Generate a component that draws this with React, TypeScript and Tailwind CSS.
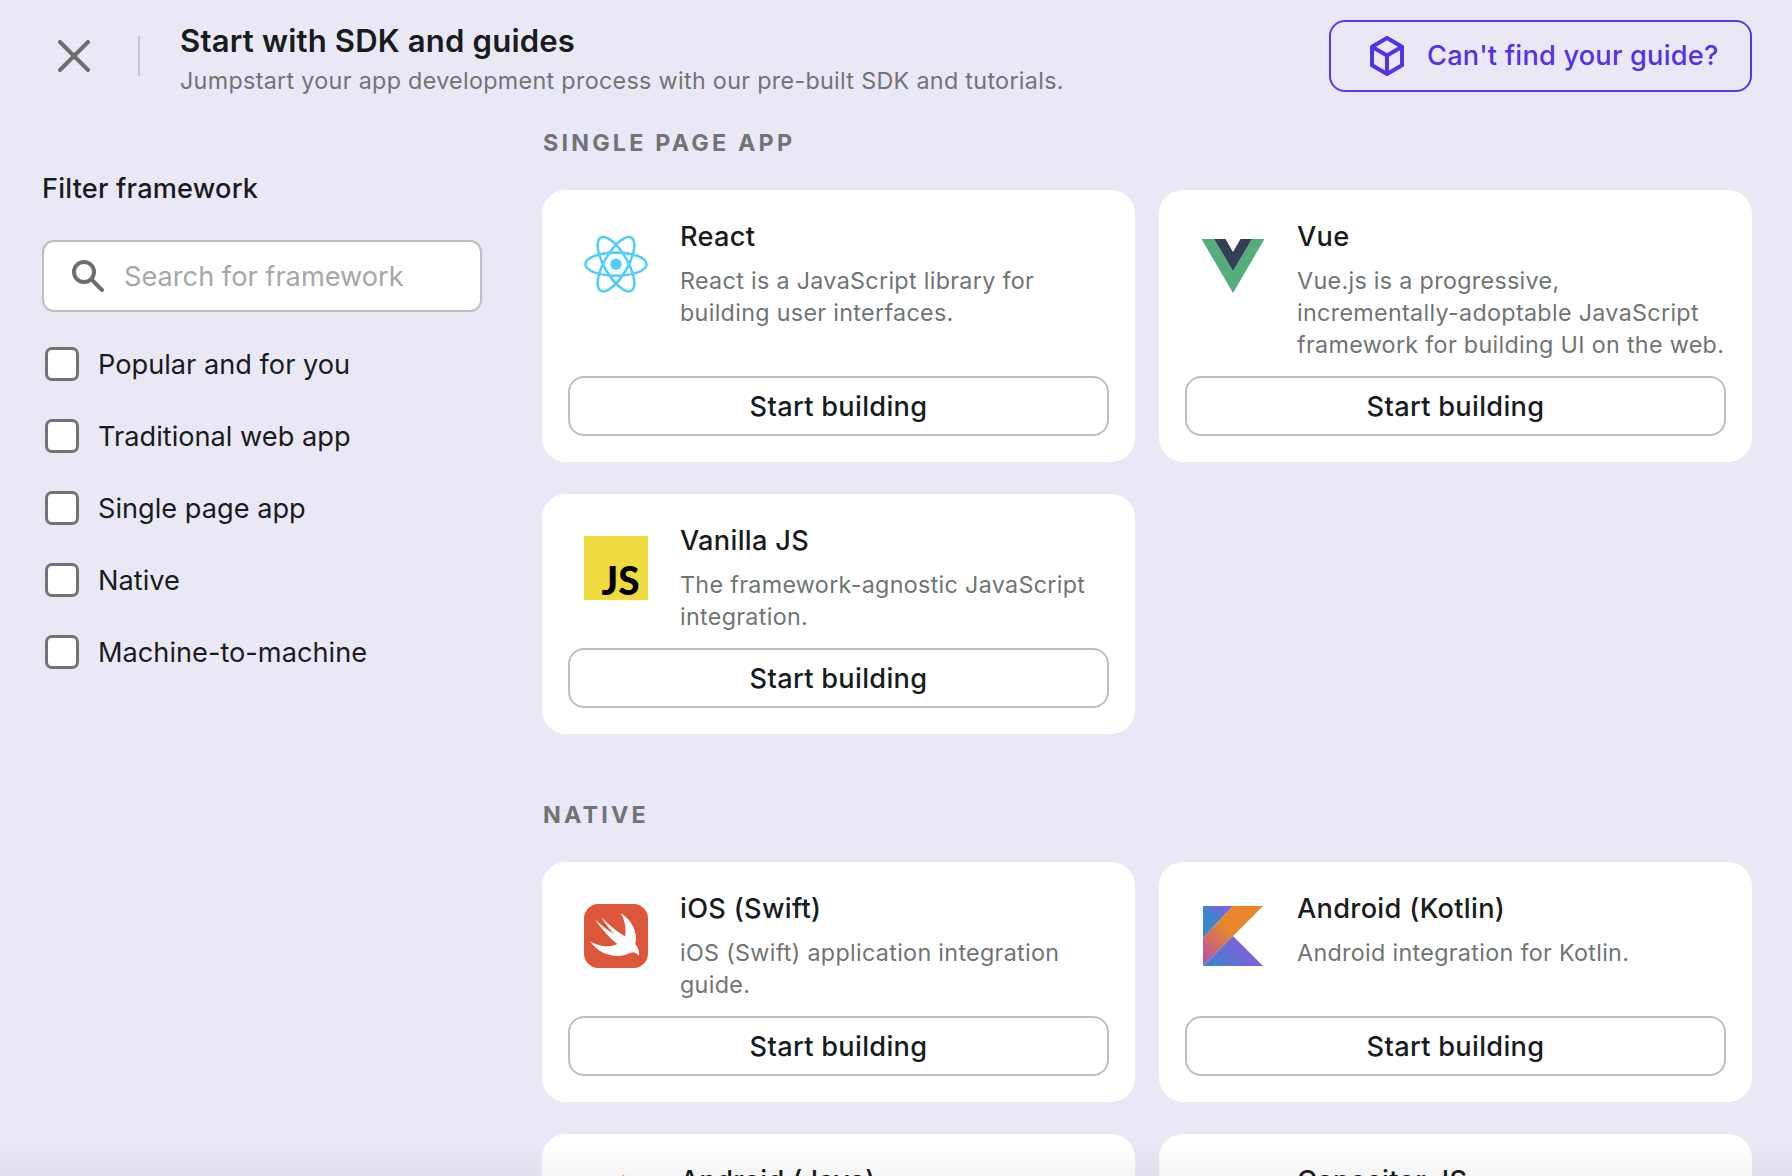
import type { ReactNode } from 'react';

const ReactLogo = () => (
  <svg viewBox="0 0 64 64" className="h-16 w-16" fill="none" stroke="#53cdfb" strokeWidth="2.6">
    <circle cx="32" cy="32.2" r="5.7" fill="#53cdfb" stroke="none" />
    <ellipse cx="32" cy="32.2" rx="30.6" ry="11.6" />
    <ellipse cx="32" cy="32.2" rx="30.6" ry="11.6" transform="rotate(60 32 32.2)" />
    <ellipse cx="32" cy="32.2" rx="30.6" ry="11.6" transform="rotate(120 32 32.2)" />
  </svg>
);

const VueLogo = () => (
  <svg viewBox="0 0 64 64" className="h-16 w-16">
    <path d="M.5 7 32 61 63.5 7H51L32 39 13 7z" fill="#56ad7c" />
    <path d="M13 7 32 39 51 7H39.5L32 20 24.5 7z" fill="#333f54" />
  </svg>
);

const JsLogo = () => (
  <svg viewBox="0 0 64 64" className="h-16 w-16">
    <path d="M0 0h64v64H0z" fill="#eedb3f" />
    <text
      x="17.5"
      y="59.3"
      textLength="38"
      lengthAdjust="spacingAndGlyphs"
      className="font-['Lato',sans-serif] text-[40px] font-black"
    >
      JS
    </text>
  </svg>
);

const SwiftLogo = () => (
  <svg viewBox="0 0 64 64" className="h-16 w-16">
    <rect width="64" height="64" rx="14.5" fill="#dd5639" />
    <path
      d="M36.7 9C49 17 54 29 51.3 40c3.2 4 4.5 8.500 3.400 12-2.200-3.500-5.700-4.500-8.700-3C34 55 17 52.500 6 37.300c10 6.200 20 6.200 27.300 2.700C24 32.500 16.500 24 11 15.300 17 21 23 26 29.700 29.700 25 24.500 21 19 17.300 13c7.200 7.500 14.700 14 23.700 19.500C42.500 25 41 16.500 36.700 9z"
      fill="#fff"
    />
  </svg>
);

const KotlinLogo = () => (
  <svg viewBox="0 0 64 64" className="h-16 w-16">
    <defs>
      <linearGradient id="kotlin-band" x1="2" y1="62" x2="44" y2="20" gradientUnits="userSpaceOnUse">
        <stop offset="0" stopColor="#b04fc0" />
        <stop offset="0.3" stopColor="#c9647a" />
        <stop offset="0.75" stopColor="#e8862a" />
      </linearGradient>
      <linearGradient id="kotlin-top" x1="8" y1="22" x2="24" y2="5" gradientUnits="userSpaceOnUse">
        <stop offset="0.3" stopColor="#3a88cc" />
        <stop offset="1" stopColor="#7865d9" />
      </linearGradient>
      <linearGradient id="kotlin-base" x1="16" y1="72" x2="42" y2="46" gradientUnits="userSpaceOnUse">
        <stop offset="0" stopColor="#3a85cf" />
        <stop offset="1" stopColor="#7865d9" />
      </linearGradient>
    </defs>
    <path d="M2 2h30L2 34z" fill="url(#kotlin-top)" />
    <path d="M32 2h30L2 62V34z" fill="url(#kotlin-band)" />
    <path d="M2 62 32 32 62 62z" fill="url(#kotlin-base)" />
  </svg>
);

const JavaLogo = () => (
  <svg viewBox="0 0 64 64" className="h-16 w-16 overflow-visible" fill="none" stroke="#e0a27c" strokeWidth="2">
    <path d="M39-1c4 10-15 14-10 22 2 4 5 6 5 9" />
  </svg>
);

const CapacitorLogo = () => (
  <svg viewBox="0 0 64 64" className="h-16 w-16">
    <path d="M8 20l9-9 36 36-9 9z" fill="#53b9ff" />
  </svg>
);

type Guide = { name: string; text: string; logo: ReactNode };

const Card = ({ name, text, logo }: Guide) => (
  <div className="flex flex-col rounded-3xl bg-white p-[26px]">
    <div className="flex gap-8 pl-4">
      <div className="mt-4 h-16 w-16 shrink-0">{logo}</div>
      <div className="-mr-6 min-w-0 flex-1">
        <h3 className="pt-px text-[27.2px] leading-10 font-medium tracking-[0.3px] text-[#191c1d]">{name}</h3>
        <p className="mt-2 -mb-px text-[23.3px] leading-8 tracking-[0.32px] text-[#707474]">
          {text.split('\n').map((line) => (
            <span key={line} className="block whitespace-nowrap">{line}</span>
          ))}
        </p>
      </div>
    </div>
    <div className="mt-auto pt-4">
      <button className="h-[60px] w-full rounded-2xl border-2 border-[#bebfc0] pt-0.5 text-[27.2px] leading-9 font-medium tracking-[0.3px] text-[#191c1d]">
        Start building
      </button>
    </div>
  </div>
);

const Section = ({ title, guides }: { title: string; guides: Guide[] }) => (
  <section>
    <h2 className="mb-[31px] pt-px pl-px text-[23.3px] leading-8 font-bold tracking-[3.2px] text-[#707474]">{title}</h2>
    <div className="grid grid-cols-2 gap-x-6 gap-y-8">
      {guides.map((guide) => (
        <Card key={guide.name} {...guide} />
      ))}
    </div>
  </section>
);

const spa: Guide[] = [
  { name: 'React', text: 'React is a JavaScript library for\nbuilding user interfaces.', logo: <ReactLogo /> },
  { name: 'Vue', text: 'Vue.js is a progressive,\nincrementally-adoptable JavaScript\nframework for building UI on the web.', logo: <VueLogo /> },
  { name: 'Vanilla JS', text: 'The framework-agnostic JavaScript\nintegration.', logo: <JsLogo /> },
];

const native: Guide[] = [
  { name: 'iOS (Swift)', text: 'iOS (Swift) application integration\nguide.', logo: <SwiftLogo /> },
  { name: 'Android (Kotlin)', text: 'Android integration for Kotlin.', logo: <KotlinLogo /> },
  { name: 'Android (Java)', text: 'Android integration for Java.', logo: <JavaLogo /> },
  { name: 'Capacitor JS', text: 'Capacitor JS integration guide.', logo: <CapacitorLogo /> },
];

const filters = ['Popular and for you', 'Traditional web app', 'Single page app', 'Native', 'Machine-to-machine'];

export default function App() {
  return (
    <div className="relative flex h-[1176px] w-[1792px] flex-col overflow-hidden bg-[#eae8f5] font-['Inter',sans-serif]">
      <header className="flex h-28 shrink-0 items-center pr-10 pl-[58px]">
        <svg viewBox="0 0 32 32" className="h-8 w-8" fill="none" stroke="#6b6e6f" strokeWidth="4" strokeLinecap="round">
          <path d="M2 2 30 30M30 2 2 30" />
        </svg>
        <div className="ml-12 h-10 w-0.5 bg-[#c4c4ca]" />
        <div className="ml-10 flex-1 pt-0.5">
          <h1 className="text-[31.1px] leading-[48px] font-semibold tracking-[0.16px] text-[#191c1d]">Start with SDK and guides</h1>
          <p className="text-[23.3px] leading-8 tracking-[0.32px] text-[#707474]">
            Jumpstart your app development process with our pre-built SDK and tutorials.
          </p>
        </div>
        <button className="flex h-[72px] w-[423px] items-center rounded-2xl border-2 border-[#5d34f2] pl-[39px] text-[27.2px] font-medium tracking-[0.2px] text-[#5430ea]">
          <svg viewBox="0 0 34 40" className="mr-[23px] h-10 w-[34px]" fill="none" stroke="currentColor" strokeWidth="4" strokeLinejoin="round">
            <path d="M17 2 32 10.7V29.3L17 38 2 29.3V10.7zM2 10.7 17 19.5 32 10.7M17 19.5V38" />
          </svg>
          <span className="pt-px whitespace-nowrap">Can't find your guide?</span>
        </button>
      </header>
      <div className="flex">
        <aside className="ml-[42px] w-[440px] shrink-0 pt-14">
          <h2 className="-mb-px pt-px text-[27.2px] leading-10 font-medium tracking-[0.18px] text-[#191c1d]">Filter framework</h2>
          <div className="mt-8 flex h-[72px] items-center rounded-xl border-2 border-[#bebfc0] bg-white pl-7">
            <svg viewBox="0 0 32 32" className="mr-5 h-8 w-8" fill="none" stroke="#6b6e6f" strokeWidth="4" strokeLinecap="round">
              <circle cx="12" cy="12" r="10" />
              <path d="M19.5 19.5 30 30" />
            </svg>
            <span className="pt-0.5 text-[27.2px] text-[#a5a7a8]">Search for framework</span>
          </div>
          <ul className="mt-8 flex flex-col gap-8 pl-[3px]">
            {filters.map((label) => (
              <li key={label} className="flex h-10 items-center gap-[19px]">
                <span className="h-[34px] w-[34px] rounded-[7px] border-[3px] border-[#707474] bg-white" />
                <span className="pt-0.5 text-[27.2px] leading-10 text-[#191c1d]">{label}</span>
              </li>
            ))}
          </ul>
        </aside>
        <main className="ml-[60px] flex w-[1210px] flex-col gap-16 pt-3.5">
          <Section title="SINGLE PAGE APP" guides={spa} />
          <Section title="NATIVE" guides={native} />
        </main>
      </div>
      <div className="absolute inset-x-0 bottom-0 h-8 bg-gradient-to-b from-transparent to-black/4" />
    </div>
  );
}
